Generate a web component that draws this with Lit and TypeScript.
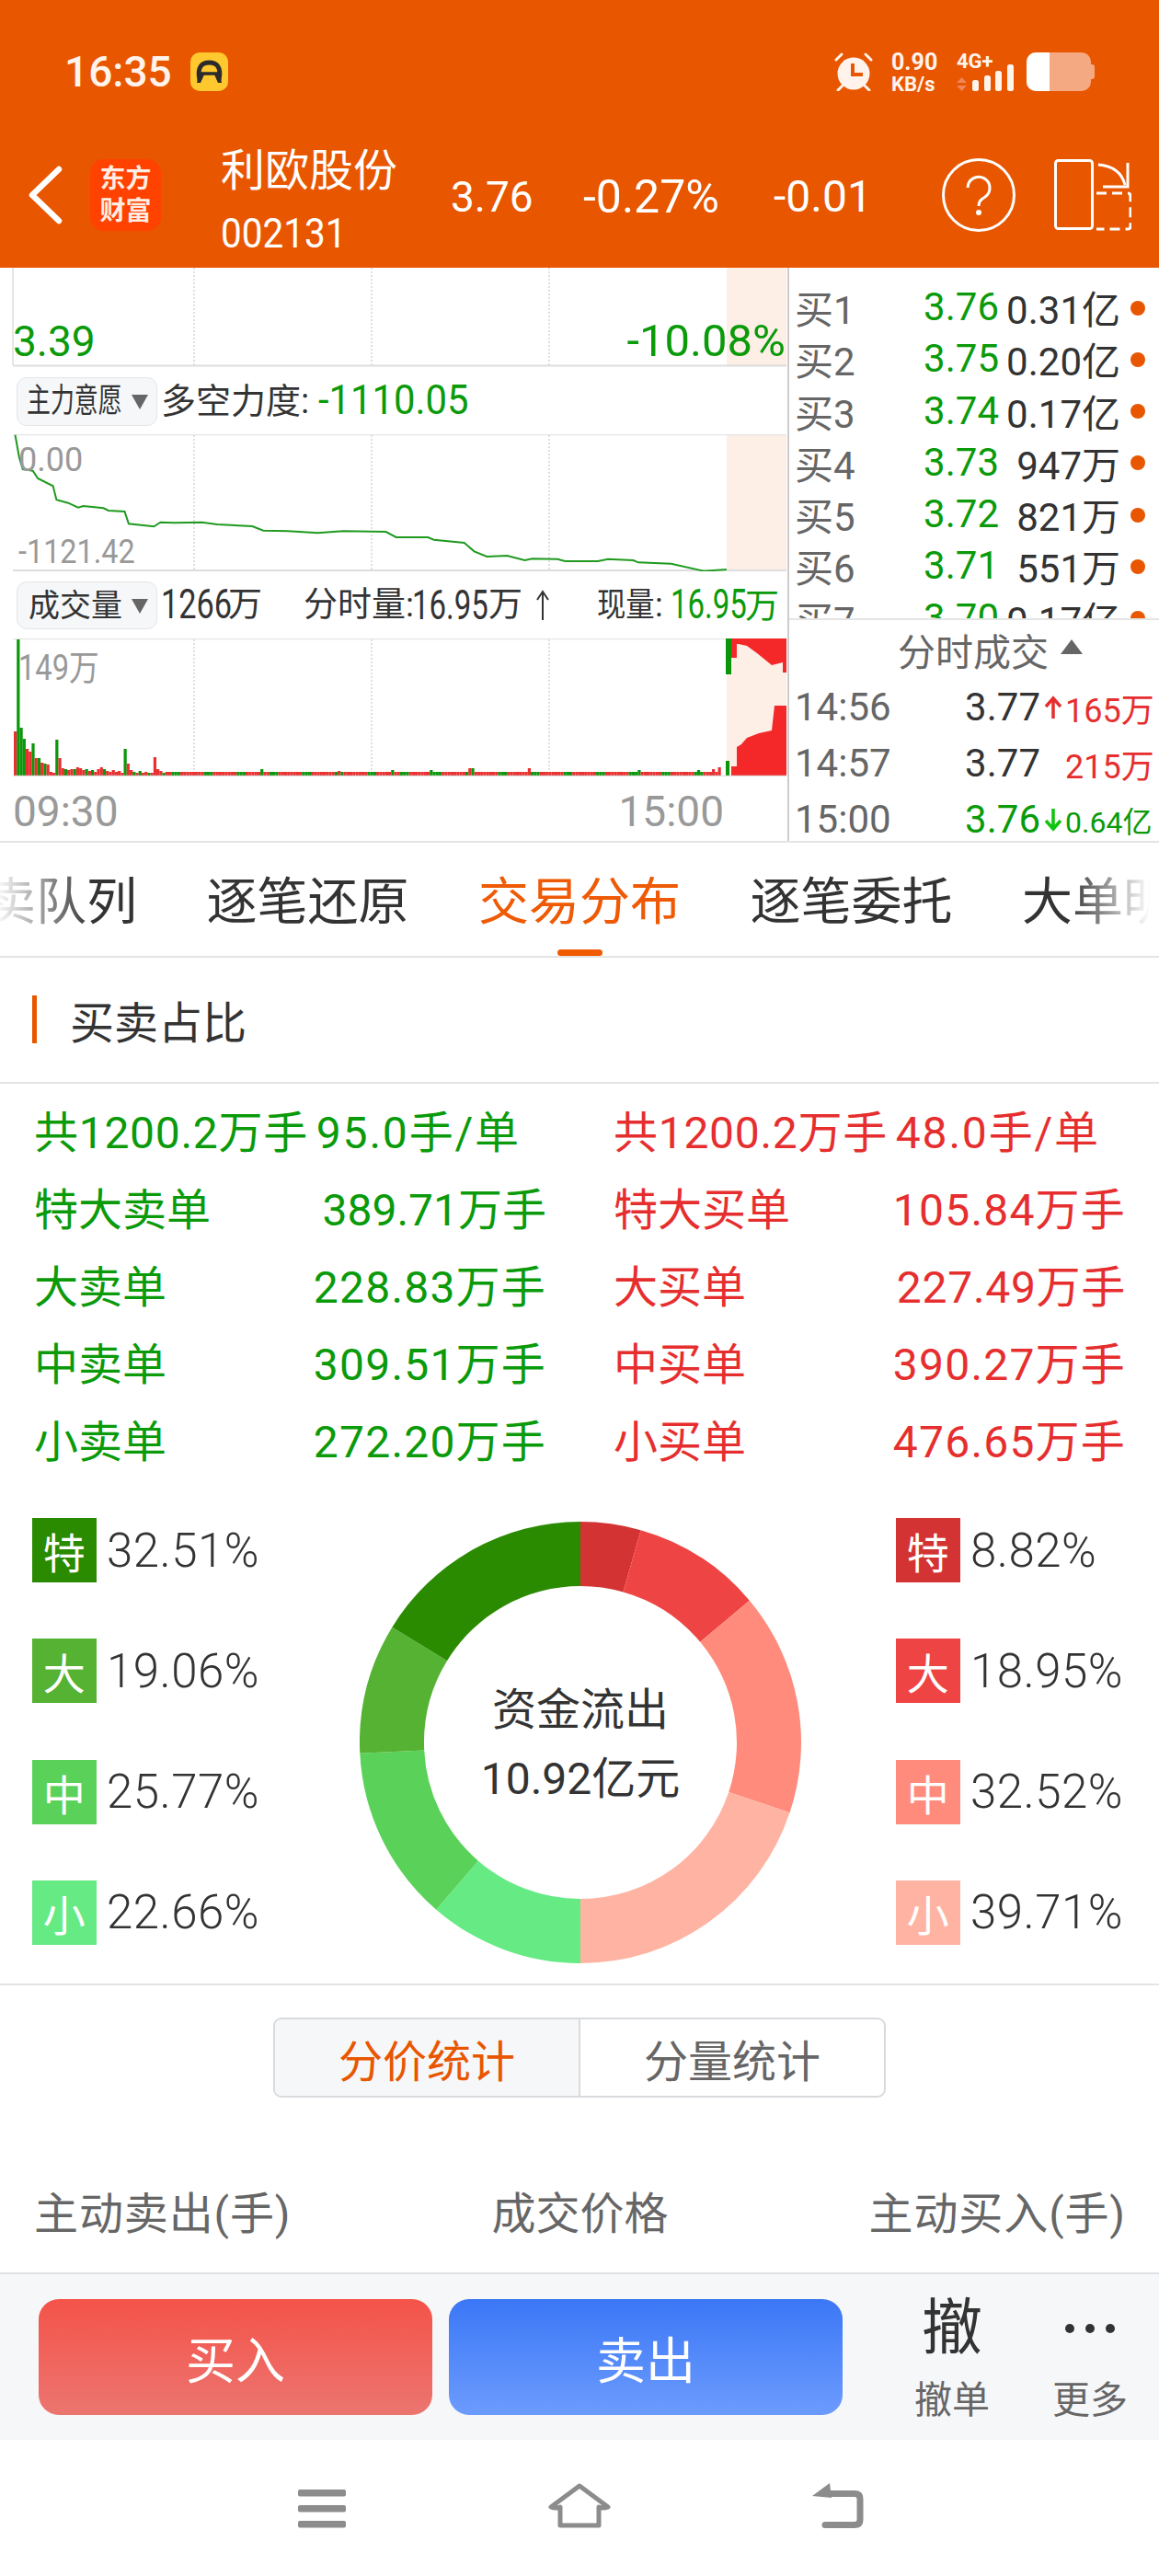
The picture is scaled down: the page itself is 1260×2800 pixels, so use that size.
import { LitElement, html, svg, css } from "lit";
import { customElement } from "lit/decorators.js";

const flowZ: [number, number][] = [[30,548],[38,620],[45,660],[65,665],[75,690],[105,715],[112,760],[135,770],[155,785],[165,780],[205,787],[215,795],[247,798],[255,838],[305,847],[318,833],[345,835],[400,833],[430,840],[500,846],[522,860],[570,862],[630,868],[680,862],[765,864],[785,882],[848,882],[860,890],[920,900],[940,928],[965,945],[1005,942],[1040,957],[1055,952],[1105,953],[1120,960],[1185,960],[1205,953],[1255,957],[1265,964],[1330,968],[1395,992],[1440,987]];
const flowPts = flowZ.map(([x, y]) => `${(x / 1.823).toFixed(1)},${(290 + y / 3).toFixed(1)}`).join(" ");

type B = [number, "r" | "g"];
const early: B[] = [[48,"r"],[148,"g"],[52,"g"],[40,"g"],[29,"r"],[26,"r"],[35,"g"],[19,"r"],[19,"g"],[14,"r"],[13,"g"],[12,"r"],[4,"r"],[3,"r"],[39,"g"],[19,"r"],[8,"r"],[7,"g"],[6,"r"],[7,"r"],[7,"g"],[9,"r"],[8,"r"],[6,"r"],[7,"g"],[5,"r"],[6,"g"],[4,"r"],[7,"r"],[9,"r"],[7,"g"],[5,"r"],[4,"r"],[6,"r"],[4,"r"],[5,"r"],[3,"r"],[29,"g"],[13,"r"],[6,"r"],[4,"g"],[3,"r"],[5,"g"],[3,"r"],[4,"r"],[3,"g"],[3,"r"],[20,"r"],[7,"r"],[5,"r"],[3,"g"],[4,"r"]];
const bumps: Record<number, B> = {83:[7,"g"],109:[5,"r"],127:[6,"g"],140:[6,"g"],153:[8,"r"],154:[8,"g"],173:[8,"r"],210:[6,"g"],230:[6,"g"],235:[7,"r"],237:[9,"r"]};
const bars: B[] = [];
for (let i = 0; i < 238; i++) {
  if (i < early.length) bars.push(early[i]);
  else if (bumps[i]) bars.push(bumps[i]);
  else bars.push([4, (i * 7919) % 11 < 3 ? "g" : "r"]);
}

function seg(a0: number, a1: number, R: number, r: number, c: number) {
  const p = (a: number, q: number) => {
    const t = (a * Math.PI) / 180;
    return `${(c + q * Math.sin(t)).toFixed(2)} ${(c - q * Math.cos(t)).toFixed(2)}`;
  };
  const large = a1 - a0 > 180 ? 1 : 0;
  return `M${p(a0, R)} A${R} ${R} 0 ${large} 1 ${p(a1, R)} L${p(a1, r)} A${r} ${r} 0 ${large} 0 ${p(a0, r)} Z`;
}
const donutData: [number, string][] = [[8.82,"#d43333"],[18.95,"#ef4444"],[32.52,"#ff8b7c"],[39.71,"#ffb4a3"],[22.66,"#66ea84"],[25.77,"#5ad25a"],[19.06,"#55b233"],[32.51,"#2a8b00"]];
let acc = 0;
const donutSegs = donutData.map(([v, col]) => {
  const a0 = acc;
  acc += v * 1.8;
  return { d: seg(a0, acc, 240, 170, 240), col };
});

const book = [
  ["买1","3.76","0.31亿"],["买2","3.75","0.20亿"],["买3","3.74","0.17亿"],["买4","3.73","947万"],
  ["买5","3.72","821万"],["买6","3.71","551万"],["买7","3.70","0.17亿"],
];
const sellRows = [["特大卖单","389.71万手",""],["大卖单","228.83万手","w2"],["中卖单","309.51万手","w2"],["小卖单","272.20万手","w2"]];
const buyRows = [["特大买单","105.84万手","w2"],["大买单","227.49万手","w1"],["中买单","390.27万手","w2"],["小买单","476.65万手","w2"]];
const legL = [["特","32.51%","l1"],["大","19.06%","l2"],["中","25.77%","l3"],["小","22.66%","l4"]];
const legR = [["特","8.82%","r1"],["大","18.95%","r2"],["中","32.52%","r3"],["小","39.71%","r4"]];

const sq = (t: string, w: number, s: number, cls = "") =>
  html`<span class="sq ${cls}" style="width:${w}px"><span style="transform:scaleX(${s})">${t}</span></span>`;

const grid = (y0: number, y1: number) => [211, 404, 597].map(
  (x) => svg`<line x1=${x} x2=${x} y1=${y0} y2=${y1} stroke="#ccc" stroke-width="1.2" stroke-dasharray="2 2"/>`
);

@customElement("app-root")
export class AppRoot extends LitElement {
  static styles = css`
    :host { display:block; width:1260px; height:2800px; background:#fff; overflow:hidden; position:relative;
      font-family:Roboto,"Noto Sans CJK SC",sans-serif; color:#333; font-weight:400; --g:#0a9a0a; --r:#e62e2e; }
    * { box-sizing:border-box; }
    svg { display:block; }
    .sq { display:inline-block; white-space:nowrap; }
    .sq > span { display:inline-block; transform-origin:0 50%; }
    .green { color:var(--g); }
    .red { color:var(--r); }

    .top { height:291px; background:#e85600; color:#fff; }
    .status { height:133px; padding:57px 74px 0 70px; display:flex; align-items:flex-start; color:#fff3ec; }
    .time { font-size:46px; line-height:42px; font-weight:500; }
    .badge { margin-left:20px; width:41px; height:42px; border-radius:10px; background:#ffc82e; }
    .sright { margin-left:auto; display:flex; align-items:flex-start; }
    .speed { margin-left:20px; width:51px; display:flex; flex-direction:column; font-weight:700; }
    .speed b { font-size:25px; line-height:22px; font-weight:700; }
    .speed i { font-style:normal; font-size:22px; line-height:20px; margin-top:3px; }
    .net { margin-left:20px; width:63px; height:42px; position:relative; font-weight:700; font-size:22px; line-height:20px; }
    .net svg { position:absolute; left:0; top:0; }
    .bat { margin-left:13px; width:70px; height:42px; border-radius:10px; background:#f5a983; position:relative; }
    .bat::before { content:""; position:absolute; left:0; top:0; bottom:0; width:25px; background:#fff; border-radius:10px 0 0 10px; }
    .bat::after { content:""; position:absolute; right:-4px; top:13px; width:4px; height:16px; background:#f5a983; border-radius:0 3px 3px 0; }
    .title { height:158px; display:grid; align-items:center;
      grid-template-columns:98px 142px 250px 144px 207px 183px 122px 1fr; }
    .back { margin-left:30px; }
    .logo { width:77px; height:78px; border-radius:15px; background:#ff4200; color:#ffece2; font-size:28px; line-height:35px;
      font-weight:700; display:flex; flex-direction:column; align-items:center; justify-content:center; }
    .name { margin-top:16px; }
    .name div { font-size:48px; line-height:68px; }
    .name .code { font-size:44px; }
    .val { font-size:46px; line-height:56px; margin-top:3px; white-space:nowrap; }
    .val.w { font-size:50px; }
    .val.m { font-size:48px; }

    .market { height:623px; display:flex; overflow:hidden; }
    .left { width:856px; flex:none; }
    .right { width:404px; border-left:2px solid #ccc; }
    .chart { position:relative; }
    .c1 { height:108px; }
    .c2 { height:149px; }
    .c3 { height:150px; }
    .lbl { position:absolute; white-space:nowrap; }
    .p339 { left:14px; top:56px; font-size:46px; line-height:48px; color:var(--g); }
    .p108 { right:2px; top:56px; font-size:49px; line-height:48px; color:var(--g); }
    .gray { color:#999; font-size:36px; line-height:36px; }
    .p000 { left:20px; top:10px; }
    .p112 { left:20px; top:110px; }
    .p149 { left:20px; top:12px; font-size:38px; line-height:40px; }
    .mrow { height:73px; display:flex; align-items:center; font-size:36px; line-height:40px; white-space:nowrap; padding-top:1px; }
    .sel { margin-left:18px; width:153px; height:53px; background:#f6f7f9; border:1px solid #e4e5e8; border-radius:11px;
      display:flex; align-items:center; padding-left:10px; position:relative; flex:none; color:#333; }
    .sel svg { position:absolute; left:124px; top:18px; }
    .sel.b { height:52px; padding-left:12px; font-size:34px; }
    .n44 { font-size:44px; }
    .dk { margin-left:4px; width:171px; font-size:38px; }
    .m4 { margin-left:4px; }
    .wan { display:inline-block; width:38px; font-size:37px; }
    .fen { margin-left:44px; font-size:37px; width:118px; display:inline-block; }
    .up { margin-left:14px; }
    .xian { margin-left:52px; }
    .colon { display:inline-block; width:17px; }
    .axis { height:71px; display:flex; justify-content:space-between; align-items:center; padding:4px 69px 0 14px; font-size:46px; color:#999; }

    .bookbox { height:383px; border-bottom:2px solid #e5e5e5; overflow:hidden; padding:12px 0 0 6px; }
    .brow { height:56.3px; display:grid; grid-template-columns:67px 155px 132px 1fr; align-items:center; font-size:42px; white-space:nowrap; }
    .brow .l { color:#666; }
    .brow .p { text-align:right; color:var(--g); }
    .brow .v { text-align:right; color:#333; }
    .dot { width:16px; height:16px; border-radius:50%; background:#e85600; margin:2px 0 0 11px; }
    .thead { height:64px; display:flex; align-items:center; font-size:41px; color:#666; padding-left:118px; }
    .thead svg { margin-left:13px; margin-top:-6px; }
    .trow { height:61px; display:grid; grid-template-columns:181px 86px 27px 91px; align-items:center; padding-left:6px; font-size:42px; white-space:nowrap; }
    .trow .t { color:#666; }
    .trow .pr { text-align:right; }
    .trow .vo { text-align:right; font-size:36px; }
    .trow .vo.s { font-size:32px; }
    .trow svg { margin-left:4px; }

    .tabs { height:127px; border-top:2px solid #e4e4e4; border-bottom:2px solid #e4e4e4; display:flex; gap:75.5px; padding-top:37px;
      font-size:55px; line-height:54px; white-space:nowrap; overflow:hidden; position:relative; }
    .tabs::before, .tabs::after { content:""; position:absolute; top:0; bottom:0; z-index:1; }
    .tabs::before { left:0; width:100px; background:linear-gradient(90deg,rgba(255,255,255,.95),rgba(255,255,255,0)); }
    .tabs::after { right:0; width:100px; background:linear-gradient(270deg,#fff 10%,rgba(255,255,255,0)); }
    .tab { flex:none; }
    .tab.first { margin-left:-16px; }
    .tab.on { color:#ee5a05; }
    .line { position:absolute; left:606px; bottom:0; width:49px; height:7px; border-radius:4px; background:#f05a00; }

    .sect { height:137px; border-bottom:2px solid #e4e4e4; display:flex; align-items:center; padding:0 0 2px 35px; font-size:48px; }
    .sect i { width:5px; height:52px; background:#e85600; margin-right:36px; }

    .table { padding:7px 36px 0 37px; display:grid; grid-template-columns:557px 557px; column-gap:73px; height:430px; font-size:48px; }
    .tcol { display:flex; flex-direction:column; }
    .tr { height:84px; display:flex; justify-content:space-between; align-items:center; white-space:nowrap; }
    .tr.g8 { justify-content:flex-start; gap:9px; }
    .tot { letter-spacing:.7px; }
    .avg { letter-spacing:1.8px; }
    .w1 { letter-spacing:.7px; }
    .w2 { letter-spacing:1.2px; }

    .donut-sec { height:550px; border-bottom:2px solid #e4e4e4; display:grid; grid-template-columns:391px 480px 1fr; padding-top:42px; }
    .leg { height:464px; display:flex; flex-direction:column; justify-content:space-between; padding-left:35px; }
    .leg.rt { padding-left:103px; }
    .li { height:70px; display:flex; align-items:center; gap:11px; font-size:51px; font-weight:300; white-space:nowrap; letter-spacing:.5px; }
    .sqr { width:70px; height:70px; display:flex; align-items:center; justify-content:center; color:#fff; font-size:46px; font-weight:400; }
    .l1 { background:#2a8b00; } .l2 { background:#55b233; } .l3 { background:#5ad25a; } .l4 { background:#66ea84; }
    .r1 { background:#d43333; } .r2 { background:#ef4444; } .r3 { background:#ff8b7c; } .r4 { background:#ffb4a3; }
    .donut { width:480px; height:480px; margin-top:4px; position:relative; }
    .center { position:absolute; inset:0; display:flex; flex-direction:column; align-items:center; justify-content:center; font-size:48px; line-height:75px; padding-top:4px; }

    .segm { width:666px; height:87px; margin:35px auto 0; border:2px solid #d8dadd; border-radius:9px; display:flex; overflow:hidden; font-size:48px; }
    .segm div { flex:1; display:flex; align-items:center; justify-content:center; color:#666; }
    .segm .on { background:#f6f7f9; color:#e85600; border-right:2px solid #d8dadd; }
    .heads { margin-top:87px; height:70px; display:flex; justify-content:space-between; align-items:center; padding:0 36px 0 37px; font-size:48px; color:#666; white-space:nowrap; }
    .heads .ls { letter-spacing:.9px; }

    .toolbar { margin-top:33px; height:182px; background:#f6f7f9; border-top:2px solid #e0e1e4; padding:27px 0 0 42px; display:flex; }
    .btn { width:428px; height:126px; border-radius:22px; color:#fff; font-size:54px; display:flex; align-items:center; justify-content:center; }
    .buy { background:linear-gradient(#f45349,#ec7570); }
    .sell { margin-left:18px; background:linear-gradient(#3b77f6,#6c9bfd); }
    .act { width:150px; display:flex; flex-direction:column; align-items:center; }
    .first-act { margin-left:44px; }
    .act .big { height:64px; font-size:66px; line-height:64px; color:#333; display:flex; align-items:center; }
    .act .sm { margin-top:26px; font-size:41px; line-height:41px; color:#666; }
    .navbar { height:148px; padding:46px 0 0 324px; display:flex; align-items:flex-start; }
    .nav2 { margin-left:220px; }
    .nav3 { margin-left:219px; }
  `;

  render() {
    return html`
      <div class="top">
        <div class="status">
          <span class="time">16:35</span>
          <div class="badge">
            <svg width="41" height="42" viewBox="0 0 41 42">
              <path d="M10 30C7 15 13 11 20.5 11S34 15 31 30" fill="none" stroke="#2b2b2b" stroke-width="5"/>
              <path d="M11 23H30" stroke="#2b2b2b" stroke-width="3.5"/>
              <path d="M15 24L11 33H7L9 24ZM26 24L30 33H34L32 24Z" fill="#2b2b2b"/>
            </svg>
          </div>
          <div class="sright">
            <svg width="42" height="42" viewBox="0 0 42 42">
              <circle cx="21" cy="23" r="17.5" fill="#fff3ec"/>
              <path d="M20 12V24H31" fill="none" stroke="#e85600" stroke-width="4"/>
              <path d="M2 8L8 2M34 2L40 8M4 41L9 36M38 41L33 36" stroke="#fff3ec" stroke-width="3" stroke-linecap="round"/>
            </svg>
            <div class="speed"><b>0.90</b><i>KB/s</i></div>
            <div class="net">4G+
              <svg width="63" height="42" viewBox="0 0 63 42">
                <path d="M0 33L5.5 27L11 33ZM0 36L5.5 42L11 36Z" fill="#f0855a"/>
                <rect x="17" y="30" width="7" height="12" rx="2.5" fill="#fff3ec"/>
                <rect x="30" y="25" width="7" height="17" rx="2.5" fill="#fff3ec"/>
                <rect x="42" y="20" width="7" height="22" rx="2.5" fill="#fff3ec"/>
                <rect x="55" y="13" width="7" height="29" rx="2.5" fill="#fff3ec"/>
              </svg>
            </div>
            <div class="bat"></div>
          </div>
        </div>
        <div class="title">
          <svg class="back" width="38" height="64" viewBox="0 0 38 64"><path d="M34 4L5 32L34 60" fill="none" stroke="#fff" stroke-width="6.5" stroke-linecap="round" stroke-linejoin="round"/></svg>
          <div class="logo"><span>东方</span><span>财富</span></div>
          <div class="name"><div>利欧股份</div><div class="code">${sq("002131", 134, 0.92)}</div></div>
          <div class="val">3.76</div>
          <div class="val w">-0.27%</div>
          <div class="val m">-0.01</div>
          <svg width="80" height="80" viewBox="0 0 80 80">
            <circle cx="40" cy="40" r="38.5" fill="none" stroke="#fff" stroke-width="3"/>
            <path d="M28 32A12 12 0 1 1 47 42C42 45 40 47 40 52" fill="none" stroke="#fff" stroke-width="3"/>
            <circle cx="40" cy="59" r="3" fill="#fff"/>
          </svg>
          <svg width="84" height="78" viewBox="0 0 84 78">
            <rect x="1.5" y="1.5" width="40" height="74" rx="3" fill="none" stroke="#fff" stroke-width="3"/>
            <path d="M46 37H80Q83 37 83 40V73Q83 76 80 76H46" fill="none" stroke="#fff" stroke-width="3" stroke-dasharray="11 6"/>
            <path d="M48 6Q72 8 77 28M80 4V30H53" fill="none" stroke="#fff" stroke-width="3"/>
          </svg>
        </div>
      </div>

      <section class="market">
        <div class="left">
          <div class="chart c1">
            <svg width="856" height="108" viewBox="0 291 856 108">
              <rect x="790" y="291" width="65" height="106" fill="#fdeee6"/>
              ${grid(291, 397)}
              <line x1="14" x2="14" y1="291" y2="397" stroke="#ddd" stroke-width="1.5"/>
              <line x1="14" x2="855" y1="397.5" y2="397.5" stroke="#ddd" stroke-width="2"/>
            </svg>
            <span class="lbl p339">3.39</span>
            <span class="lbl p108">-10.08%</span>
          </div>
          <div class="mrow">
            <div class="sel">${sq("主力意愿", 104, 0.72)}
              <svg width="18" height="16" viewBox="0 0 18 16"><path d="M0 0H18L9 16Z" fill="#666"/></svg>
            </div>
            <span class="dk">多空力度:</span>
            <span class="green">${sq("-1110.05", 163, 0.95, "n44")}</span>
          </div>
          <div class="chart c2">
            <svg width="856" height="149" viewBox="0 472 856 149">
              <rect x="790" y="473" width="65" height="146" fill="#fdeee6"/>
              ${grid(473, 619)}
              <line x1="14" x2="855" y1="472.5" y2="472.5" stroke="#e5e5e5" stroke-width="1.5"/>
              <line x1="14" x2="855" y1="620" y2="620" stroke="#ddd" stroke-width="2"/>
              <polyline points=${flowPts} fill="none" stroke="#1f9a1f" stroke-width="2"/>
            </svg>
            <span class="lbl gray p000">0.00</span>
            <span class="lbl gray p112">${sq("-1121.42", 128, 0.9)}</span>
          </div>
          <div class="mrow">
            <div class="sel b">成交量
              <svg width="18" height="16" viewBox="0 0 18 16"><path d="M0 0H18L9 16Z" fill="#666"/></svg>
            </div>
            <span class="m4">${sq("1266", 73, 0.78, "n44")}</span><span class="wan">万</span>
            <span class="fen">分时量:</span>${sq("16.95", 83, 0.75, "n44")}<span class="wan">万</span>
            <svg class="up" width="14" height="34" viewBox="0 0 14 34"><path d="M7 33V2M1 11L7 2L13 11" fill="none" stroke="#333" stroke-width="2"/></svg>
            <span class="xian">${sq("现量", 63, 0.87)}</span><span class="colon">:</span>
            <span class="green">${sq("16.95", 81, 0.75, "n44")}<span class="wan">万</span></span>
          </div>
          <div class="chart c3">
            <svg width="856" height="150" viewBox="0 694 856 150">
              <rect x="790" y="695" width="65" height="148" fill="#fdeee6"/>
              ${grid(695, 843)}
              <line x1="14" x2="855" y1="694.5" y2="694.5" stroke="#e5e5e5" stroke-width="1.5"/>
              ${bars.map(([h, c], i) => svg`<rect x=${(15 + i * 3.23).toFixed(2)} y=${843 - h} width="3.23" height=${h} fill=${c === "r" ? "#e83030" : "#0a960a"}/>`)}
              <rect x="789" y="827" width="4" height="16" fill="#0a960a"/>
              <path d="M795 694H855V731L851 731L851 720L839 723L823 710L812 702L803 700L801 700V715H795Z" fill="#f42829"/>
              <rect x="789" y="694" width="6" height="39" fill="#0a960a"/>
              <path d="M795 843V833H801V812L806 809L812 802L825 797L839 794L842 767H855V843Z" fill="#f42829"/>
              <line x1="14" x2="855" y1="843.5" y2="843.5" stroke="#ddd" stroke-width="1.5"/>
            </svg>
            <span class="lbl gray p149">${sq("149万", 88, 0.86)}</span>
          </div>
          <div class="axis"><span>09:30</span><span>15:00</span></div>
        </div>
        <div class="right">
          <div class="bookbox">
            ${book.map((b) => html`<div class="brow"><span class="l">${b[0]}</span><span class="p">${b[1]}</span><span class="v">${b[2]}</span><i class="dot"></i></div>`)}
          </div>
          <div class="thead">分时成交
            <svg width="24" height="16" viewBox="0 0 24 16"><path d="M12 0L24 16H0Z" fill="#666"/></svg>
          </div>
          <div class="trow"><span class="t">14:56</span><span class="pr">3.77</span>
            <svg width="20" height="26" viewBox="0 0 20 26"><path d="M10 25V4M2 12L10 3L18 12" fill="none" stroke="#e62e2e" stroke-width="3.5"/></svg>
            <span class="vo red">165万</span></div>
          <div class="trow"><span class="t">14:57</span><span class="pr">3.77</span><span></span><span class="vo red">215万</span></div>
          <div class="trow"><span class="t">15:00</span><span class="pr green">3.76</span>
            <svg width="20" height="26" viewBox="0 0 20 26"><path d="M10 1V22M2 14L10 23L18 14" fill="none" stroke="#0fc40f" stroke-width="3.5"/></svg>
            <span class="vo s green">0.64亿</span></div>
        </div>
      </section>

      <nav class="tabs">
        <span class="tab first">卖队列</span>
        <span class="tab">逐笔还原</span>
        <span class="tab on">交易分布</span>
        <span class="tab">逐笔委托</span>
        <span class="tab">大单明细</span>
        <span class="line"></span>
      </nav>

      <div class="sect"><i></i>买卖占比</div>

      <div class="table">
        <div class="tcol green">
          <div class="tr g8"><span class="tot">共1200.2万手</span><span class="avg">95.0手/单</span></div>
          ${sellRows.map((r) => html`<div class="tr"><span>${r[0]}</span><span class=${r[2]}>${r[1]}</span></div>`)}
        </div>
        <div class="tcol red">
          <div class="tr g8"><span class="tot">共1200.2万手</span><span class="avg">48.0手/单</span></div>
          ${buyRows.map((r) => html`<div class="tr"><span>${r[0]}</span><span class=${r[2]}>${r[1]}</span></div>`)}
        </div>
      </div>

      <div class="donut-sec">
        <div class="leg">${legL.map((l) => html`<div class="li"><span class="sqr ${l[2]}">${l[0]}</span>${l[1]}</div>`)}</div>
        <div class="donut">
          <svg width="480" height="480" viewBox="0 0 480 480">
            ${donutSegs.map((s) => svg`<path d=${s.d} fill=${s.col}/>`)}
          </svg>
          <div class="center"><span>资金流出</span><span>10.92亿元</span></div>
        </div>
        <div class="leg rt">${legR.map((l) => html`<div class="li"><span class="sqr ${l[2]}">${l[0]}</span>${l[1]}</div>`)}</div>
      </div>

      <div class="segm"><div class="on">分价统计</div><div>分量统计</div></div>
      <div class="heads"><span class="ls">主动卖出(手)</span><span>成交价格</span><span class="ls">主动买入(手)</span></div>

      <div class="toolbar">
        <div class="btn buy">买入</div>
        <div class="btn sell">卖出</div>
        <div class="act first-act"><span class="big">撤</span><span class="sm">撤单</span></div>
        <div class="act">
          <span class="big"><svg width="56" height="12" viewBox="0 0 56 12" fill="#333"><circle cx="6" cy="6" r="5"/><circle cx="28" cy="6" r="5"/><circle cx="50" cy="6" r="5"/></svg></span>
          <span class="sm">更多</span>
        </div>
      </div>

      <div class="navbar">
        <svg width="52" height="52" viewBox="0 0 52 52" fill="#8c8c8c">
          <rect y="8" width="52" height="7.5" rx="2"/><rect y="25" width="52" height="7.5" rx="2"/><rect y="42" width="52" height="7.5" rx="2"/>
        </svg>
        <svg class="nav2" width="68" height="52" viewBox="0 0 68 52">
          <path d="M34 4L3 27Q8 29 13 27V47H55V27Q60 29 65 27Z" fill="none" stroke="#8c8c8c" stroke-width="5" stroke-linejoin="round"/>
        </svg>
        <svg class="nav3" width="56" height="52" viewBox="0 0 56 52">
          <path d="M18 12.5H46Q52 12.5 52 18V41Q52 46.5 46 46.5H14" fill="none" stroke="#8c8c8c" stroke-width="7" stroke-linecap="round"/>
          <path d="M19 1L0 15L21 17Z" fill="#8c8c8c"/>
        </svg>
      </div>
    `;
  }
}
